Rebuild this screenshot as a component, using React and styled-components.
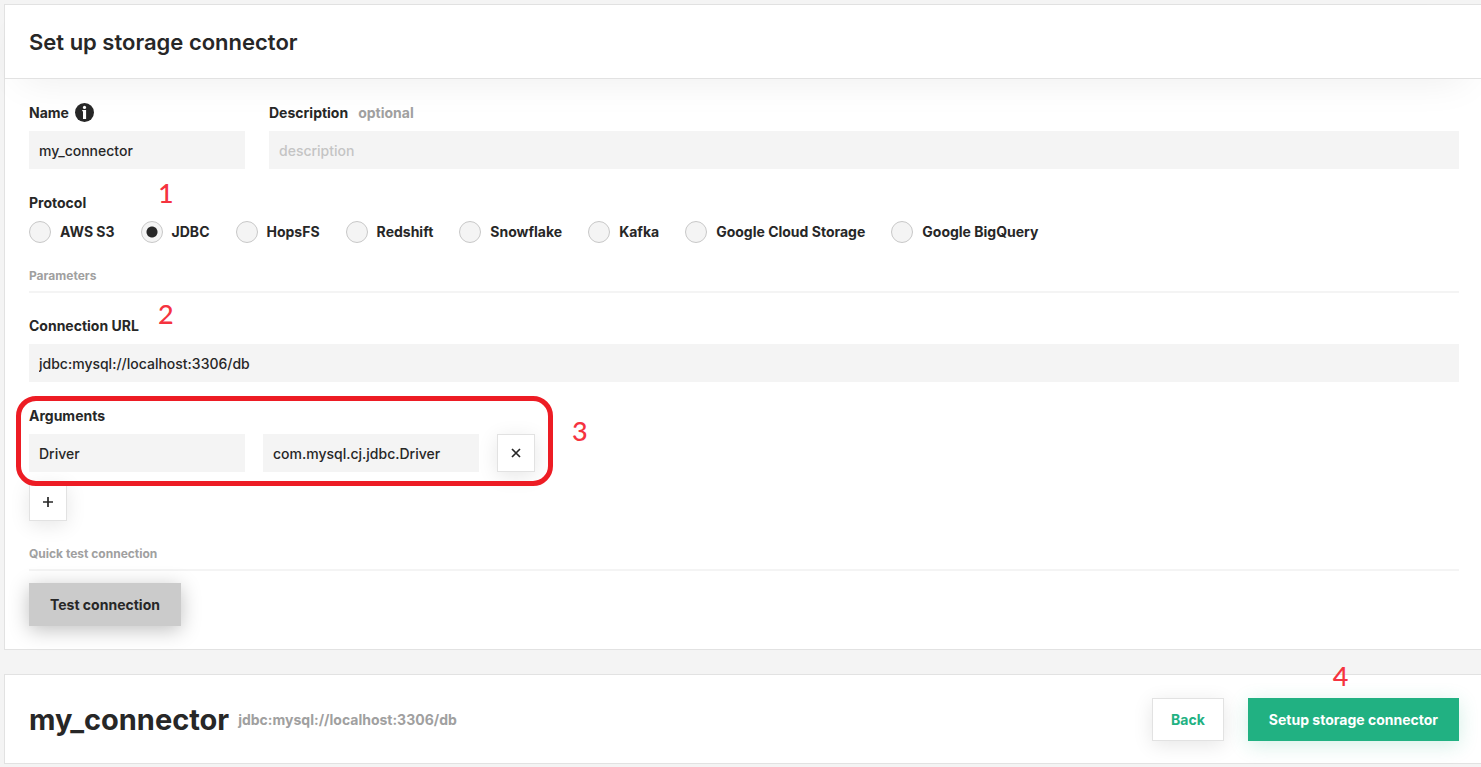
import React, { useState } from 'react'
import styled, { createGlobalStyle } from 'styled-components'

const protocols = [
    'AWS S3',
    'JDBC',
    'HopsFS',
    'Redshift',
    'Snowflake',
    'Kafka',
    'Google Cloud Storage',
    'Google BigQuery',
]

function App() {

    const [name, setName] = useState('my_connector')
    const [description, setDescription] = useState('')
    const [protocol, setProtocol] = useState('JDBC')
    const [url, setUrl] = useState('jdbc:mysql://localhost:3306/db')
    const [args, setArgs] = useState([
        { key: 'Driver', value: 'com.mysql.cj.jdbc.Driver' },
    ])

    const changeArg = (index, field, value) => {
        setArgs(args.map((arg, i) => (i === index ? { ...arg, [field]: value } : arg)))
    }

    const removeArg = (index) => {
        setArgs(args.filter((arg, i) => i !== index))
    }

    return (
        <Page>
            <GlobalStyle />
            <Card>
                <Header>
                    <Title>Set up storage connector</Title>
                </Header>
                <Content>
                    <FieldRow>
                        <NameField>
                            <Label htmlFor="name">
                                Name
                                <InfoIcon />
                            </Label>
                            <Input id="name" value={name} onChange={(e) => setName(e.target.value)} />
                        </NameField>
                        <Field>
                            <Label htmlFor="description">
                                Description
                                <Optional>optional</Optional>
                            </Label>
                            <Input
                                id="description"
                                placeholder="description"
                                value={description}
                                onChange={(e) => setDescription(e.target.value)}
                            />
                        </Field>
                    </FieldRow>

                    <ProtocolGroup>
                        <Legend>Protocol</Legend>
                        <RadioRow>
                            {protocols.map((item) => (
                                <RadioLabel key={item}>
                                    <Radio
                                        type="radio"
                                        name="protocol"
                                        checked={protocol === item}
                                        onChange={() => setProtocol(item)}
                                    />
                                    {item}
                                </RadioLabel>
                            ))}
                        </RadioRow>
                        <Step $left="129px" $top="-44px">1</Step>
                    </ProtocolGroup>

                    <SectionTitle>Parameters</SectionTitle>

                    <UrlField>
                        <Label htmlFor="url">Connection URL</Label>
                        <Input id="url" value={url} onChange={(e) => setUrl(e.target.value)} />
                        <Step $left="129px" $top="-18px">2</Step>
                    </UrlField>

                    <Arguments>
                        <Legend>Arguments</Legend>
                        {args.map((arg, index) => (
                            <ArgumentRow key={index}>
                                <ArgumentInput
                                    aria-label="Argument name"
                                    value={arg.key}
                                    onChange={(e) => changeArg(index, 'key', e.target.value)}
                                />
                                <ArgumentInput
                                    aria-label="Argument value"
                                    value={arg.value}
                                    onChange={(e) => changeArg(index, 'value', e.target.value)}
                                />
                                <IconButton aria-label="Remove argument" onClick={() => removeArg(index)}>
                                    <CrossIcon />
                                </IconButton>
                            </ArgumentRow>
                        ))}
                        <Highlight />
                        <Step $left="543px" $top="-19px">3</Step>
                    </Arguments>
                    <AddButton
                        aria-label="Add argument"
                        onClick={() => setArgs([...args, { key: '', value: '' }])}
                    >
                        <PlusIcon />
                    </AddButton>

                    <SectionTitle>Quick test connection</SectionTitle>
                    <TestButton>Test connection</TestButton>
                </Content>
            </Card>

            <Footer>
                <ConnectorName>{name}</ConnectorName>
                <ConnectorUrl>{url}</ConnectorUrl>
                <Actions>
                    <BackButton>Back</BackButton>
                    <SetupButton>
                        Setup storage connector
                        <Step $left="85px" $top="-38px">4</Step>
                    </SetupButton>
                </Actions>
            </Footer>
        </Page>
    )
}

export default App

function InfoIcon() {
    return (
        <svg width="19" height="19" viewBox="0 0 19 19" aria-hidden="true">
            <circle cx="9.5" cy="9.5" r="9.5" fill="#272727" />
            <circle cx="9.5" cy="4.4" r="1.6" fill="#fff" />
            <path d="M7.2 7h3.9v9H8V8.2h-.8z" fill="#fff" />
        </svg>
    )
}

function CrossIcon() {
    return (
        <svg width="10" height="10" viewBox="0 0 10 10" aria-hidden="true">
            <path d="M1 1l8 8M9 1l-8 8" stroke="#272727" strokeWidth="1.7" />
        </svg>
    )
}

function PlusIcon() {
    return (
        <svg width="10" height="10" viewBox="0 0 10 10" aria-hidden="true">
            <path d="M5 0v10M0 5h10" stroke="#272727" strokeWidth="1.7" />
        </svg>
    )
}

const GlobalStyle = createGlobalStyle`
    * {
        box-sizing: border-box;
    }
    body {
        margin: 0;
        background-color: #f4f4f4;
        color: #272727;
        font-family: Inter, "Liberation Sans", sans-serif;
        font-size: 14px;
        line-height: 20px;
    }
    button, input {
        font: inherit;
        color: inherit;
    }
`

const Page = styled.main`
    padding: 4px 0 3px 4px;
`
const Card = styled.section`
    background-color: #fff;
    border: 1px solid #e2e2e2;
    border-right: none;
`
const Header = styled.header`
    padding: 22px 24px 21px;
    border-bottom: 1px solid #e2e2e2;
    box-shadow: 0 16px 40px -16px rgba(0, 0, 0, 0.08);
`
const Title = styled.h1`
    margin: 0;
    font-size: 22px;
    line-height: 30px;
    font-weight: 600;
`
const Content = styled.div`
    padding: 24px 22px 23px 24px;
`
const FieldRow = styled.div`
    display: flex;
    gap: 24px;
`
const Field = styled.div`
    flex: 1;
    display: flex;
    flex-direction: column;
    gap: 8px;
`
const NameField = styled(Field)`
    flex: 0 0 216px;
`
const UrlField = styled(Field)`
    position: relative;
    margin-top: 23px;
`
const Label = styled.label`
    display: flex;
    gap: 6px;
    height: 20px;
    font-weight: 700;
`
const Optional = styled.span`
    margin-left: 4px;
    color: #a0a0a0;
`
const Input = styled.input`
    width: 100%;
    height: 38px;
    padding: 0 10px;
    border: none;
    border-radius: 0;
    background-color: #f4f4f4;
    font-weight: 500;

    &::placeholder {
        color: #c4c4c4;
        opacity: 1;
    }
`
const ProtocolGroup = styled.fieldset`
    position: relative;
    margin: 24px 0;
    padding: 0;
    border: none;
`
const Legend = styled.legend`
    padding: 0;
    margin-bottom: 8px;
    font-weight: 700;
`
const RadioRow = styled.div`
    display: flex;
    flex-wrap: wrap;
    gap: 8px 26px;
`
const RadioLabel = styled.label`
    display: flex;
    align-items: center;
    gap: 9px;
    font-weight: 700;
`
const Radio = styled.input`
    appearance: none;
    width: 22px;
    height: 22px;
    margin: 0;
    border: 1px solid #c8c8c8;
    border-radius: 50%;
    background-color: #f4f4f4;

    &:checked {
        background-image: radial-gradient(circle, #272727 5px, transparent 6px);
    }
`
const SectionTitle = styled.h2`
    margin: 24px 0 0;
    padding-bottom: 6px;
    border-bottom: 2px solid #f4f4f4;
    color: #a0a0a0;
    font-size: 12px;
    line-height: 18px;
    font-weight: 700;
`
const Arguments = styled.fieldset`
    position: relative;
    margin: 24px 0 0;
    padding: 0;
    border: none;
`
const ArgumentRow = styled.div`
    display: flex;
    gap: 18px;
`
const ArgumentInput = styled(Input)`
    width: 216px;
`
const IconButton = styled.button`
    display: grid;
    place-items: center;
    width: 38px;
    height: 38px;
    padding: 0;
    border: 1px solid #e2e2e2;
    background-color: #fff;
    box-shadow: 0 4px 20px rgba(0, 0, 0, 0.1);
    cursor: pointer;
`
const AddButton = styled(IconButton)`
    margin-top: 11px;
`
const Button = styled.button`
    height: 43px;
    padding: 0 21px;
    border: none;
    font-weight: 700;
    cursor: pointer;
`
const TestButton = styled(Button)`
    margin-top: 12px;
    background-color: #cbcbcb;
    box-shadow: 0 4px 20px rgba(0, 0, 0, 0.25);
`
const BackButton = styled(Button)`
    padding: 0 18px;
    border: 1px solid #e2e2e2;
    background-color: #fff;
    color: #21b182;
    box-shadow: 0 4px 20px rgba(0, 0, 0, 0.1);
`
const SetupButton = styled(Button)`
    position: relative;
    background-color: #21b182;
    color: #fff;
    box-shadow: 0 4px 20px rgba(33, 177, 130, 0.2);
`
const Footer = styled.footer`
    display: flex;
    align-items: center;
    gap: 9px;
    margin-top: 24px;
    padding: 23px 22px 22px 24px;
    background-color: #fff;
    border: 1px solid #e2e2e2;
    border-right: none;
`
const ConnectorName = styled.span`
    font-size: 29px;
    line-height: 36px;
    font-weight: 700;
`
const ConnectorUrl = styled.span`
    color: #a0a0a0;
    font-weight: 700;
`
const Actions = styled.div`
    display: flex;
    gap: 24px;
    margin-left: auto;
`
/* walkthrough marks that sit over the form */
const Step = styled.span`
    position: absolute;
    left: ${(props) => props.$left};
    top: ${(props) => props.$top};
    color: #f5333f;
    font-family: Lato, sans-serif;
    font-size: 27px;
    line-height: 32px;
    font-weight: 500;
`
const Highlight = styled.div`
    position: absolute;
    left: -13px;
    top: -38px;
    bottom: -14px;
    width: 537px;
    border: 5px solid #ed1c24;
    border-radius: 20px;
    pointer-events: none;
    z-index: 1;
`
